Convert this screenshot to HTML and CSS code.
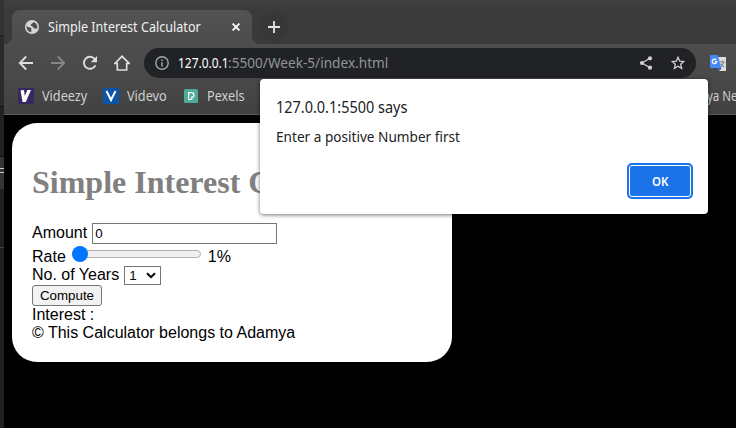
FILE: index.html
```html
<!DOCTYPE html>
<html lang="en">
<head>
<meta charset="utf-8">
<title>Simple Interest Calculator</title>
<link rel="stylesheet" href="styles.css">
</head>
<body>
<aside class="behind"><i class="seg s1"></i><i class="seg s2"></i><i class="seg s3"></i><i class="seg s4"></i><i class="seg s5"></i></aside>
<main class="window">
  <header class="tabs">
    <div class="tab">
      <svg class="globe" width="14" height="14" viewBox="0 0 14 14"><circle cx="7" cy="7" r="7" fill="#d6d6d6"/><path d="M1.6 5.8C3 7.6 4.5 7.2 5.8 7.8 7 8.4 6 9.6 6.3 12.2C3.5 12 1.4 9.8 1.6 5.8Z M8.6 1.9C8 3.8 5.6 3.2 5.8 5.4 6.6 6.6 8 6 8.4 7.6 9 9 10.6 8.6 12.2 8.4 12.8 5.5 11.4 2.7 8.6 1.9Z" fill="#4d4d4d"/></svg>
      <span class="tab-title">Simple Interest Calculator</span>
      <svg class="close" width="8" height="8" viewBox="0 0 8 8"><path d="M.6.6 7.4 7.4M7.4.6.6 7.4" stroke="#fff" stroke-width="1.8"/></svg>
    </div>
    <div class="newtab"><svg width="12" height="12" viewBox="0 0 12 12"><path d="M6 0V12M0 6H12" stroke="#e4e4e4" stroke-width="1.8"/></svg></div>
  </header>
  <nav class="toolbar">
    <svg class="nav" width="16" height="16" viewBox="0 0 16 16"><path d="M15 8H2M8.2 1.5 1.8 8 8.2 14.5" fill="none" stroke="#dedede" stroke-width="1.8"/></svg>
    <svg class="nav" width="16" height="16" viewBox="0 0 16 16"><path d="M1 8H14M7.8 1.5 14.2 8 7.8 14.5" fill="none" stroke="#858585" stroke-width="1.8"/></svg>
    <svg class="nav" width="16" height="16" viewBox="0 0 16 16"><path d="M13.4 10.3A6 6 0 1 1 12.6 4" fill="none" stroke="#dedede" stroke-width="1.9"/><path d="M15 1V7.2H8.8Z" fill="#dedede"/></svg>
    <svg class="nav" width="16" height="16" viewBox="0 0 16 16"><path d="M.8 8.5 8 1.3 15.2 8.5H12.7V15H3.3V8.5Z" fill="none" stroke="#dedede" stroke-width="1.7"/></svg>
    <div class="address">
      <svg class="info" width="14" height="14" viewBox="0 0 14 14"><circle cx="7" cy="7" r="6.2" fill="none" stroke="#a4a7aa" stroke-width="1.4"/><path d="M7 6.2V10.5M7 3.5V5" stroke="#a4a7aa" stroke-width="1.5"/></svg>
      <span class="url"><b>127.0.0.1</b><span>:5500/Week-5/index.html</span></span>
      <svg class="share" width="14" height="14" viewBox="0 0 14 14"><path d="M11 2.2 3 7 11 11.7" fill="none" stroke="#d0d0d0" stroke-width="1.3"/><g fill="#d0d0d0"><circle cx="11" cy="2.3" r="2.1"/><circle cx="3" cy="7" r="2.1"/><circle cx="11" cy="11.7" r="2.1"/></g></svg>
      <svg class="star" width="14" height="14" viewBox="0 0 14 14"><path d="M7 1.3 8.7 5.1 12.8 5.5 9.7 8.2 10.6 12.4 7 10.2 3.4 12.4 4.3 8.2 1.2 5.5 5.3 5.1Z" fill="none" stroke="#d0d0d0" stroke-width="1.3"/></svg>
    </div>
    <svg class="translate" width="16" height="16" viewBox="0 0 16 16"><path d="M7 2H16V16H9Z" fill="#dedede"/><path d="M10 7H15M12.5 5.5V7M14 7 10.5 12M11 9 14 12" stroke="#758c8d" stroke-width="1.1" fill="none"/><path d="M1 0H7.7L11.5 13H1Q0 13 0 12V1Q0 0 1 0Z" fill="#4689f5"/><path d="M8.5 13H11.5L9.5 16Z" fill="#2855c4"/><path d="M6.3 5A2.3 2.3 0 1 0 6.8 6.6H4.6" fill="none" stroke="#fff" stroke-width="1.2"/></svg>
  </nav>
  <nav class="bookmarks">
    <svg class="ico" width="16" height="16" viewBox="0 0 16 16"><path fill="#35295e" d="M0 0H16V16H0Z"/><path d="M2.5 2.5 6 2 6.8 8 9.3 2H13L7.8 14H4.6Z" fill="#fff"/></svg><span class="bm b1"><span>Videezy</span></span>
    <svg class="ico" width="16" height="16" viewBox="0 0 16 16"><path fill="#0a55a5" d="M0 0H16V16H0Z"/><path d="M3.5 3 8 12 12.5 3" fill="none" stroke="#fff" stroke-width="2"/></svg><span class="bm b2"><span>Videvo</span></span>
    <svg class="ico" width="14" height="14" viewBox="0 0 14 14"><rect width="14" height="14" rx="1.5" fill="#50aa9b"/><path d="M4.7 3.7H7.7A2 2 0 0 1 7.7 8.2V10.5H4.7Z" fill="none" stroke="#fff" stroke-width="1.2"/></svg><span class="bm b3"><span>Pexels</span></span>
    <span class="bm b4"><span>ya Ne</span></span>
  </nav>
  <section class="page">
    <div class="card">
      <h1>Simple Interest Calculator</h1>
      <div class="row amount"><label for="amount">Amount</label><input id="amount" class="field" type="text" value="0"></div>
      <div class="row rate"><span>Rate</span><span class="slider"><i class="thumb"></i></span><span>1%</span></div>
      <div class="row years"><span class="years-label">No. of Years</span><span class="select">1<svg width="10" height="7" viewBox="0 0 10 7"><path d="M1 1.2 5 5.2 9 1.2" fill="none" stroke="#000" stroke-width="2"/></svg></span></div>
      <div class="row"><button class="compute">Compute</button></div>
      <div class="row text">Interest :</div>
      <div class="row text">© This Calculator belongs to Adamya</div>
    </div>
  </section>
</main>
<div class="dialog" role="alertdialog">
  <div class="origin">127.0.0.1:5500 says</div>
  <div class="message">Enter a positive Number first</div>
  <button class="ok"><span>OK</span></button>
</div>
</body>
</html>
```
FILE: styles.css
```css
* { box-sizing: border-box; }
body { margin: 0; width: 736px; height: 428px; overflow: hidden; display: flex; background: #000; position: relative; font-family: "Noto Sans", sans-serif; }
svg { display: block; flex: none; }
.behind { width: 4px; flex: none; background: #202020; display: flex; flex-direction: column; }
.seg { display: block; flex: none; }
.s1 { height: 35px; background: #333; }
.s2 { height: 72px; background: #2b2b2b; border-top: 1px solid #1a1a1a; border-bottom: 1px solid #111; }
.s3 { height: 50px; background: #222; border-bottom: 1px solid #111; }
.s4 { height: 32px; background: linear-gradient(#343434 11px, #ccc 11px 12px, #343434 12px 15px, #ccc 15px 16px, #343434 16px); }
.s5 { height: 59px; border-bottom: 1px solid #444; }
.window { width: 732px; height: 428px; display: flex; flex-direction: column; overflow: hidden; }
.tabs { height: 44px; flex: none; display: flex; padding: 10px 0 0 8px; background: radial-gradient(circle at 0 0, transparent 7.5px, #4d4d4d 8.5px) 0 36px / 8px 8px no-repeat, radial-gradient(circle at 100% 0, transparent 7.5px, #4d4d4d 8.5px) 248px 36px / 8px 8px no-repeat, linear-gradient(#404040, #3a3a3a 12px); }
.tab { width: 240px; height: 34px; display: flex; align-items: center; padding: 0 12px 0 13px; border-radius: 8px 8px 0 0; background: linear-gradient(#535353, #4c4c4c); }
.tab-title { margin-left: 9px; width: 153px; white-space: nowrap; font-size: 13.8px; line-height: 20px; color: #f0f0f0; transform: scaleX(.913); transform-origin: left; }
.close { margin-left: auto; }
.newtab { width: 28px; height: 28px; margin: 3px 0 0 8px; display: grid; place-items: center; border-radius: 50%; background: #373737; }
.toolbar { height: 38px; flex: none; display: flex; align-items: center; padding-left: 14px; background: linear-gradient(#4d4d4d, #484848); }
.nav { margin-right: 16px; }
.address { width: 552px; height: 30px; margin-left: -2px; border-radius: 15px; background: #202226; display: flex; align-items: center; padding: 0 11px; }
.url { display: flex; margin: -1px 0 0 9px; white-space: nowrap; font-size: 14px; color: #929496; }
.url b { width: 50px; font-weight: 400; color: #fff; transform: scaleX(.853); transform-origin: left; }
.url span { transform: scaleX(.973); transform-origin: left; }
.share { margin-left: auto; }
.star { margin-left: 18px; }
.translate { margin-left: 14px; }
.bookmarks { height: 33px; flex: none; display: flex; align-items: center; padding: 0 0 5px 14px; border-bottom: 1px solid #5c5c5c; background: linear-gradient(#484848, #414141); overflow: hidden; }
.bm { margin-left: 8px; white-space: nowrap; font-size: 14px; line-height: 20px; color: #cfcfcf; flex: none; }
.bm span { display: inline-block; transform: scaleX(.905); transform-origin: left; }
.b1 { width: 61px; }
.b2 { width: 57px; }
.b3 { width: 48px; margin-left: 9px; }
.b4 { width: 30px; margin-left: 452px; }
.b4 span { transform: scaleX(.82); }
.page { flex: 1; padding: 8px; background: #000; }
.card { width: 440px; height: 239px; padding: 20px; border-radius: 25px; background: #fff; color: #000; font: 16px "Liberation Sans", Arial, sans-serif; }
h1 { margin: 21px 0 22px; height: 37px; font: bold 32px/37px "Liberation Serif", serif; color: gray; white-space: nowrap; }
.row { display: flex; align-items: center; white-space: nowrap; }
.amount { height: 21px; }
.amount label { line-height: 18px; padding-bottom: 2px; }
.field { width: 185px; height: 21px; margin-left: 5px; padding: 1px 2px; border: 1px solid #767676; border-radius: 0; outline: 0; font: 13.333px "Liberation Sans", Arial, sans-serif; }
.rate { height: 22px; line-height: 18px; padding-top: 4px; }
.slider { width: 129px; height: 8px; margin: -6px 7px 0 6px; border: 1px solid #b2b2b2; border-radius: 4px; background: #efefef; display: flex; align-items: center; }
.thumb { width: 16px; height: 16px; margin-left: -1px; flex: none; border-radius: 50%; background: #0075ff; }
.years { height: 19px; line-height: 18px; }
.years-label { padding-bottom: 2px; }
.select { width: 37px; height: 19px; margin-left: 5px; padding: 0 4px; display: flex; align-items: center; justify-content: space-between; border: 1px solid #767676; font-size: 13.333px; }
.compute { width: 70px; height: 21px; padding: 0; border: 1px solid #767676; border-radius: 3px; background: #f2f2f2; color: #000; font: 13.333px "Liberation Sans", Arial, sans-serif; }
.text { height: 18px; line-height: 18px; }
.dialog { position: absolute; left: 260px; top: 79px; width: 448px; height: 135px; padding: 17px 17px 16px 16px; border-radius: 4px; background: #fff; color: #202124; box-shadow: 0 1px 4px rgba(0,0,0,.55); display: flex; flex-direction: column; white-space: nowrap; }
.origin { height: 22px; line-height: 22px; font-size: 15.5px; transform: scaleX(.933); transform-origin: left; }
.message { height: 20px; line-height: 20px; margin-top: 9px; font-size: 14px; transform: scaleX(.972); transform-origin: left; }
.ok { align-self: flex-end; width: 62px; height: 32px; margin-top: 18px; padding: 0; border: 1px solid #fff; border-radius: 3px; background: #1a73e8; box-shadow: 0 0 0 2px #1a73e8; color: #fff; font: 600 13px "Noto Sans", sans-serif; }
.ok span { display: inline-block; transform: scaleX(.88); }
```
